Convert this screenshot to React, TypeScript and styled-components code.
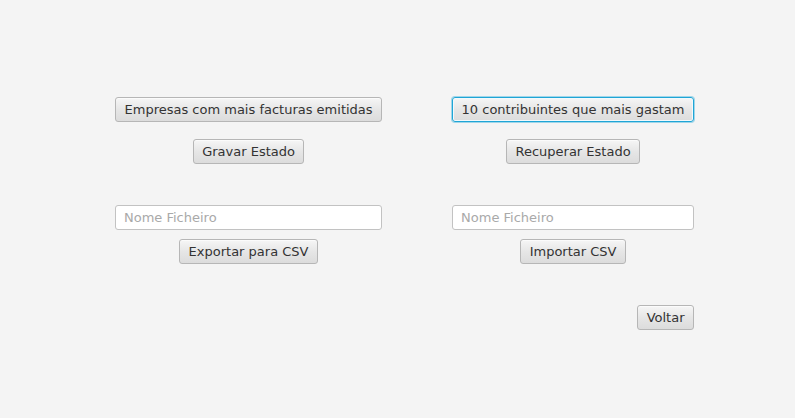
import React from "react";
import styled, { createGlobalStyle } from "styled-components";

const Global = createGlobalStyle`
  html, body { margin: 0; padding: 0; background: #f4f4f4; }
  body { font-family: "DejaVu Sans", "Liberation Sans", sans-serif; font-size: 13px; color: #333; }
  #root { width: 795px; height: 418px; }
`;

const Page = styled.div`
  width: 795px;
  height: 418px;
  box-sizing: border-box;
  padding: 97px 0 0 115px;
  display: grid;
  grid-template-columns: max-content max-content;
  column-gap: 70px;
  align-content: start;
`;

const Cell = styled.div<{ $top?: number; $align?: string }>`
  display: flex;
  justify-content: ${(p) => p.$align || "center"};
  margin-top: ${(p) => p.$top || 0}px;
`;

const Button = styled.button<{ $focused?: boolean }>`
  font-family: "DejaVu Sans", "Liberation Sans", sans-serif;
  font-size: 13px;
  color: #333333;
  height: 25px;
  box-sizing: border-box;
  padding: 0 8.5px;
  border-radius: 3px;
  border: 1px solid ${(p) => (p.$focused ? "#1fa5d6" : "#b6b6b6")};
  box-shadow: ${(p) =>
    p.$focused
      ? "inset 0 0 0 1px #f2f9fc, 0 0 0 1px rgba(3,158,211,0.35)"
      : "inset 0 1px 0 #fbfbfb"};
  background: linear-gradient(to bottom, #f6f6f6 0%, #e6e6e6 50%, #dcdcdc 100%);
  white-space: nowrap;
  line-height: 23px;
  cursor: default;
`;

const Field = styled.input`
  width: 100%;
  height: 25px;
  box-sizing: border-box;
  border: 1px solid #c2c2c2;
  border-radius: 3px;
  background: #ffffff;
  padding: 0 8px;
  font-family: "DejaVu Sans", "Liberation Sans", sans-serif;
  font-size: 13px;
  color: #333;
  outline: none;
  &::placeholder { color: #a9a9a9; }
`;

export default function App() {
  return (
    <>
      <Global />
      <Page>
        <Cell>
          <Button>Empresas com mais facturas emitidas</Button>
        </Cell>
        <Cell>
          <Button $focused>10 contribuintes que mais gastam</Button>
        </Cell>
        <Cell $top={17}>
          <Button>Gravar Estado</Button>
        </Cell>
        <Cell $top={17}>
          <Button>Recuperar Estado</Button>
        </Cell>
        <Cell $top={41}>
          <Field placeholder="Nome Ficheiro" />
        </Cell>
        <Cell $top={41}>
          <Field placeholder="Nome Ficheiro" />
        </Cell>
        <Cell $top={9}>
          <Button>Exportar para CSV</Button>
        </Cell>
        <Cell $top={9}>
          <Button>Importar CSV</Button>
        </Cell>
        <div />
        <Cell $top={41} $align="flex-end">
          <Button>Voltar</Button>
        </Cell>
      </Page>
    </>
  );
}
